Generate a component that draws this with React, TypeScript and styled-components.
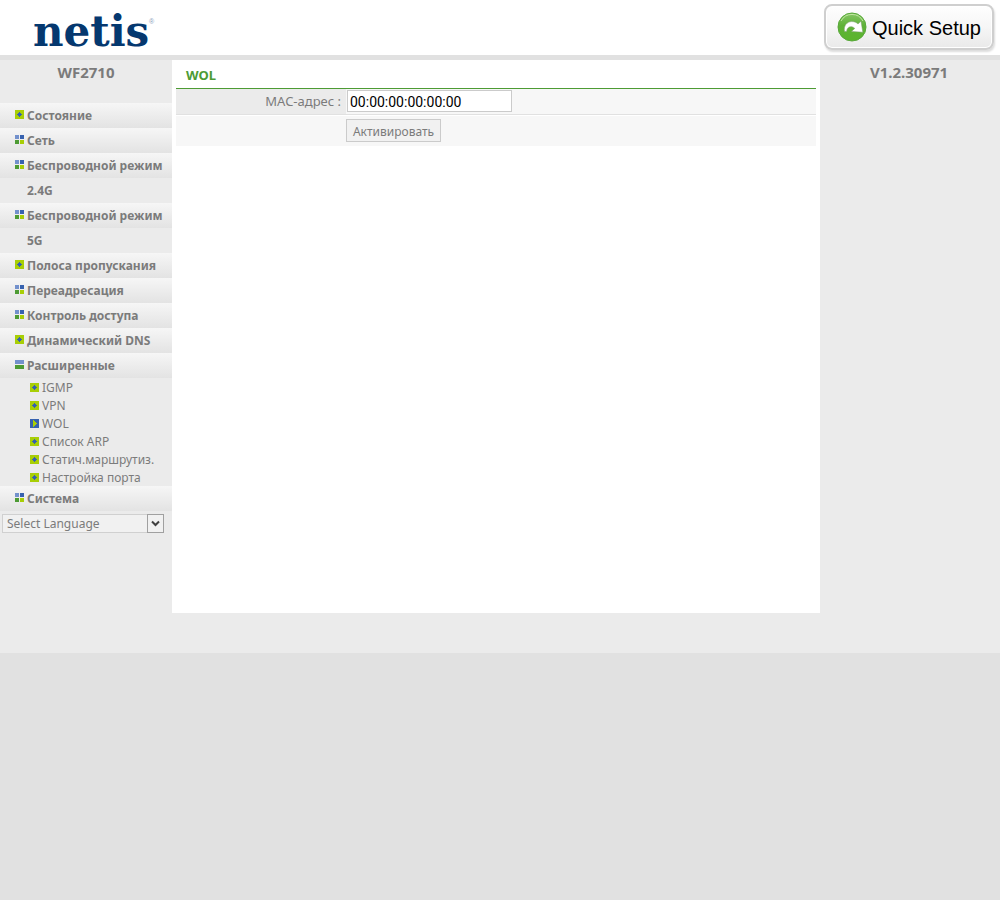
import React from "react";
import styled, { createGlobalStyle, css } from "styled-components";

const sans = `"Noto Sans", "Open Sans", sans-serif`;

const GlobalStyle = createGlobalStyle`
  *, *::before, *::after { box-sizing: border-box; }
  body {
    margin: 0;
    background: #e1e1e1;
    color: #7b7b7b;
    font-family: ${sans};
    font-size: 12px;
  }
`;

const Header = styled.header`
  display: flex;
  justify-content: space-between;
  height: 60px;
  background: #fff;
  border-bottom: 5px solid #e1e1e1;
`;

const Brand = styled.a`
  display: block;
  padding-left: 30px;
`;

const QuickButton = styled.button`
  display: flex;
  align-items: center;
  gap: 5px;
  width: 170px;
  height: 46px;
  margin: 4px 6px 0 0;
  padding: 0 0 0 11px;
  border: 2px solid #cfcfcf;
  border-radius: 8px;
  background: linear-gradient(#fefefe, #f6f6f6 50%, #e9e9e9);
  box-shadow: inset 0 0 0 1px #fff, 1px 2px 2px #ddd;
  color: #000;
  font-family: "Liberation Sans", Arial, sans-serif;
  font-size: 20px;
  white-space: nowrap;
`;

const QuickText = styled.span`
  padding-top: 2px;
`;

const Columns = styled.div`
  display: flex;
  align-items: flex-start;
  padding-bottom: 40px;
  background: #ebebeb;
`;

const Sidebar = styled.aside`
  flex: 0 0 172px;
`;

const Info = styled.aside`
  flex: 0 0 180px;
`;

const Model = styled.div<{ $offset?: boolean }>`
  padding-right: ${(p) => (p.$offset ? "2px" : "0")};
  height: 43px;
  line-height: 24px;
  font-size: 15px;
  font-weight: 700;
  text-align: center;
`;

const List = styled.ul`
  margin: 0;
  padding: 0;
  list-style: none;
`;

const row = css`
  display: flex;
  align-items: flex-start;
  color: inherit;
  text-decoration: none;
  svg { flex: none; }
`;

const MenuLink = styled.a`
  ${row}
  gap: 3px;
  padding-left: 15px;
  line-height: 25px;
  font-weight: 700;
  background: linear-gradient(#f6f6f6, #e3e3e3) no-repeat 0 0 / 100% 25px;
  svg { margin-top: 7px; }
`;

const SubLink = styled.a`
  ${row}
  gap: 3px;
  height: 18px;
  padding-left: 30px;
  line-height: 20px;
  white-space: nowrap;
  svg { margin-top: 5px; }
`;

const Language = styled.div`
  position: relative;
  margin: 3px 8px 0 2px;
  height: 19px;
`;

const LanguageSelect = styled.select`
  display: block;
  appearance: none;
  width: 100%;
  height: 19px;
  padding: 0 20px 0 4px;
  border: 1px solid #d0d0d0;
  border-radius: 0;
  background: #f1f1f1;
  color: #7b7b7b;
  font-family: ${sans};
  font-size: 12px;
  line-height: 17px;
`;

const Arrow = styled.svg`
  position: absolute;
  top: 0;
  right: 0;
  pointer-events: none;
`;

const Content = styled.main`
  flex: 1;
  min-width: 0;
  min-height: 553px;
  padding: 0 4px;
  background: #fff;
`;

const Title = styled.h1`
  margin: 0;
  padding: 2px 10px 0;
  height: 29px;
  border-bottom: 1px solid #4d9b34;
  color: #4d9b34;
  font-size: 13px;
  line-height: 27px;
  font-weight: 700;
`;

const Field = styled.div`
  display: flex;
  height: 26px;
  border-bottom: 1px solid #e1e1e1;
  background: #f7f7f7;
`;

const Label = styled.label`
  width: 170px;
  padding-right: 5px;
  background: #ebebeb;
  font-size: 13px;
  line-height: 25px;
  text-align: right;
`;

const MacInput = styled.input`
  width: 165px;
  height: 22px;
  margin: 1px 0 0 1px;
  padding: 2px 2px 0;
  border: 1px solid #cbcbcb;
  background: #fff;
  color: #000;
  font-family: Roboto, sans-serif;
  font-size: 14px;
`;

const Actions = styled.div`
  margin-top: 1px;
  padding: 3px 0 4px 170px;
  background: #f7f7f7;
  box-shadow: 0 -1px #fff;
`;

const Submit = styled.button`
  display: block;
  width: 95px;
  height: 23px;
  padding: 2px 0 0;
  border: 1px solid #cbcbcb;
  background: #f1f1f1;
  color: #7b7b7b;
  font-family: ${sans};
  font-size: 12px;
  white-space: nowrap;
`;

type Kind = "leaf" | "group" | "open" | "current";

function Bullet({ kind }: { kind: Kind }) {
  return (
    <svg width="9" height="9" viewBox="0 0 9 9" shapeRendering="crispEdges" aria-hidden="true">
      {kind === "leaf" && (
        <>
          <path fill="#a8ce06" d="M0 0h9v9H0z" />
          <path fill="#3762af" d="M4 2h1v1h1v1h1v1H6v1H5v1H4V6H3V5H2V4h1V3h1z" />
        </>
      )}
      {kind === "group" && (
        <>
          <path fill="#7391cc" d="M0 0h4v4H0z" />
          <path fill="#3762af" d="M5 0h4v4H5z" />
          <path fill="#4d9b34" d="M0 5h4v4H0z" />
          <path fill="#a8ce06" d="M5 5h4v4H5z" />
        </>
      )}
      {kind === "open" && (
        <>
          <path fill="#7391cc" d="M0 0h9v4H0z" />
          <path fill="#4d9b34" d="M0 5h9v4H0z" />
        </>
      )}
      {kind === "current" && (
        <>
          <path fill="#3762af" d="M0 0h9v9H0z" />
          <path fill="#a8ce06" d="M3 1h1v1h1v1h1v1h1v1H6v1H5v1H4v1H3z" />
        </>
      )}
    </svg>
  );
}

function Logo() {
  return (
    <svg width="130" height="55" viewBox="0 0 130 55" role="img" aria-label="netis">
      <text x="3" y="46" fill="#05386f" fontFamily="DejaVu Serif, serif" fontWeight="700" fontSize="42">
        netis
      </text>
      <text x="119" y="24" fill="#8aa0bb" fontFamily="Liberation Sans, sans-serif" fontSize="7">
        ®
      </text>
    </svg>
  );
}

function QuickIcon() {
  return (
    <svg width="30" height="30" viewBox="0 0 30 30" aria-hidden="true">
      <defs>
        <linearGradient id="ball" x1="0" y1="0" x2="0" y2="1">
          <stop offset="0" stopColor="#86c765" />
          <stop offset="0.45" stopColor="#5fb238" />
          <stop offset="1" stopColor="#5bb52c" />
        </linearGradient>
      </defs>
      <circle cx="15" cy="15" r="14" fill="url(#ball)" stroke="#58a83a" />
      <path d="M4 9A12.5 12.5 0 0 1 26 9" fill="none" stroke="#c2e6a2" />
      <path
        fill="#fff"
        stroke="#7a9a6c"
        strokeWidth="0.5"
        d="M7.5 19.5C6.5 13.5 10 9.8 14.5 9.6C17.5 9.5 19.5 10.5 21 12L24 9.2L25.8 20.2L14.5 19.4L17.8 16.4C15 13.4 9.8 14.2 9.6 19.5Z"
      />
    </svg>
  );
}

const menuTop: { text: string; kind: Kind }[] = [
  { text: "Состояние", kind: "leaf" },
  { text: "Сеть", kind: "group" },
  { text: "Беспроводной режим 2.4G", kind: "group" },
  { text: "Беспроводной режим 5G", kind: "group" },
  { text: "Полоса пропускания", kind: "leaf" },
  { text: "Переадресация", kind: "group" },
  { text: "Контроль доступа", kind: "group" },
  { text: "Динамический DNS", kind: "leaf" },
];

const advanced = ["IGMP", "VPN", "WOL", "Список ARP", "Статич.маршрутиз.", "Настройка порта"];

function MenuItem({ text, kind, children }: { text: string; kind: Kind; children?: React.ReactNode }) {
  return (
    <li>
      <MenuLink href="#">
        <Bullet kind={kind} />
        <span>{text}</span>
      </MenuLink>
      {children}
    </li>
  );
}

export default function App() {
  return (
    <>
      <GlobalStyle />
      <Header>
        <Brand href="#">
          <Logo />
        </Brand>
        <QuickButton type="button">
          <QuickIcon />
          <QuickText>Quick Setup</QuickText>
        </QuickButton>
      </Header>
      <Columns>
        <Sidebar>
          <Model>WF2710</Model>
          <nav>
            <List>
              {menuTop.map((m) => (
                <MenuItem key={m.text} {...m} />
              ))}
              <MenuItem text="Расширенные" kind="open">
                <List>
                  {advanced.map((name) => (
                    <li key={name}>
                      <SubLink href="#">
                        <Bullet kind={name === "WOL" ? "current" : "leaf"} />
                        {name}
                      </SubLink>
                    </li>
                  ))}
                </List>
              </MenuItem>
              <MenuItem text="Система" kind="group" />
            </List>
          </nav>
          <Language>
            <LanguageSelect aria-label="Select Language">
              <option>Select Language</option>
            </LanguageSelect>
            <Arrow width="17" height="19" viewBox="0 0 17 19" aria-hidden="true">
              <rect x="0.5" y="0.5" width="16" height="18" fill="#f1f1f1" stroke="#a0a0a0" />
              <path d="M5 7.5L8.5 11L12 7.5" fill="none" stroke="#404040" strokeWidth="2" />
            </Arrow>
          </Language>
        </Sidebar>
        <Content>
          <Title>WOL</Title>
          <form onSubmit={(e) => e.preventDefault()}>
            <Field>
              <Label htmlFor="mac">MAC-адрес :</Label>
              <MacInput id="mac" type="text" defaultValue="00:00:00:00:00:00" />
            </Field>
            <Actions>
              <Submit type="submit">Активировать</Submit>
            </Actions>
          </form>
        </Content>
        <Info>
          <Model $offset>V1.2.30971</Model>
        </Info>
      </Columns>
    </>
  );
}
